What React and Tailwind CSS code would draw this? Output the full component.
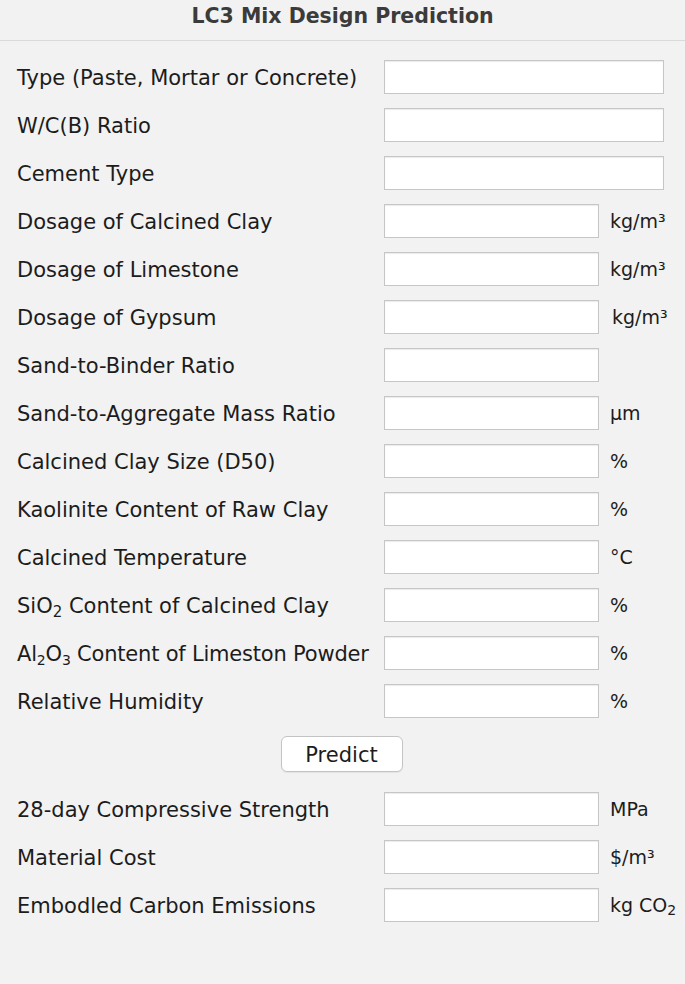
import React from "react";

const inputs = [
  { label: "Type (Paste, Mortar or Concrete)", wide: true },
  { label: "W/C(B) Ratio", wide: true },
  { label: "Cement Type", wide: true },
  { label: "Dosage of Calcined Clay", unit: "kg/m³" },
  { label: "Dosage of Limestone", unit: "kg/m³" },
  { label: "Dosage of Gypsum", unit: "kg/m³", shift: true },
  { label: "Sand-to-Binder Ratio" },
  { label: "Sand-to-Aggregate Mass Ratio", unit: "µm" },
  { label: "Calcined Clay Size (D50)", unit: "%" },
  { label: "Kaolinite Content of Raw Clay", unit: "%" },
  { label: "Calcined Temperature", unit: "°C" },
  {
    label: (
      <>
        SiO<sub className="text-[15px] bottom-[-4px]">2</sub> Content of Calcined Clay
      </>
    ),
    unit: "%",
  },
  {
    label: (
      <span className="tracking-[-0.2px]">
        Al<sub className="text-[14px] bottom-[-4px]">2</sub>O
        <sub className="text-[14px] bottom-[-4px]">3</sub> Content of Limeston Powder
      </span>
    ),
    unit: "%",
  },
  { label: "Relative Humidity", unit: "%" },
];

const outputs = [
  { label: "28-day Compressive Strength", unit: "MPa" },
  { label: "Material Cost", unit: "$/m³" },
  {
    label: "Embodled Carbon Emissions",
    unit: (
      <>
        kg CO<sub className="text-[14px] bottom-[-3px]">2</sub>
      </>
    ),
  },
];

function Row({ label, unit, wide, shift }) {
  return (
    <div className="flex items-center h-[34px]">
      <div className="w-[384px] shrink-0 pl-[17px] pt-[4px] text-[21px] text-[#1c1c1c] whitespace-nowrap">
        {label}
      </div>
      <input
        type="text"
        className={
          (wide ? "w-[280px]" : "w-[215px]") +
          " h-[34px] shrink-0 bg-white border border-[#c6c6c6] shadow-[inset_0_1px_1px_rgba(0,0,0,0.08)] outline-none"
        }
      />
      {unit && (
        <span
          className={
            (shift ? "ml-[13px]" : "ml-[11px]") +
            " text-[19px] text-[#1c1c1c] whitespace-nowrap"
          }
        >
          {unit}
        </span>
      )}
    </div>
  );
}

export default function App() {
  return (
    <div
      className="w-[685px] h-[984px] bg-[#f2f2f2] flex flex-col"
      style={{ fontFamily: '"DejaVu Sans", sans-serif' }}
    >
      <div className="h-[41px] border-b border-[#dadada] flex items-center justify-center">
        <h1 className="text-[20.5px] font-bold text-[#3b3b3b] -mt-[7px]">
          LC3 Mix Design Prediction
        </h1>
      </div>

      <div className="mt-[19px] flex flex-col gap-[14px]">
        {inputs.map((r, i) => (
          <Row key={i} {...r} />
        ))}
      </div>

      <div className="mt-[18px] flex justify-center">
        <button className="w-[122px] h-[36px] ml-[-2px] pt-[3px] bg-white border border-[#c4c4c4] rounded-[6px] text-[21px] text-[#1c1c1c] shadow-[0_1px_1px_rgba(0,0,0,0.06)]">
          Predict
        </button>
      </div>

      <div className="mt-[20px] flex flex-col gap-[14px]">
        {outputs.map((r, i) => (
          <Row key={i} {...r} />
        ))}
      </div>
    </div>
  );
}
